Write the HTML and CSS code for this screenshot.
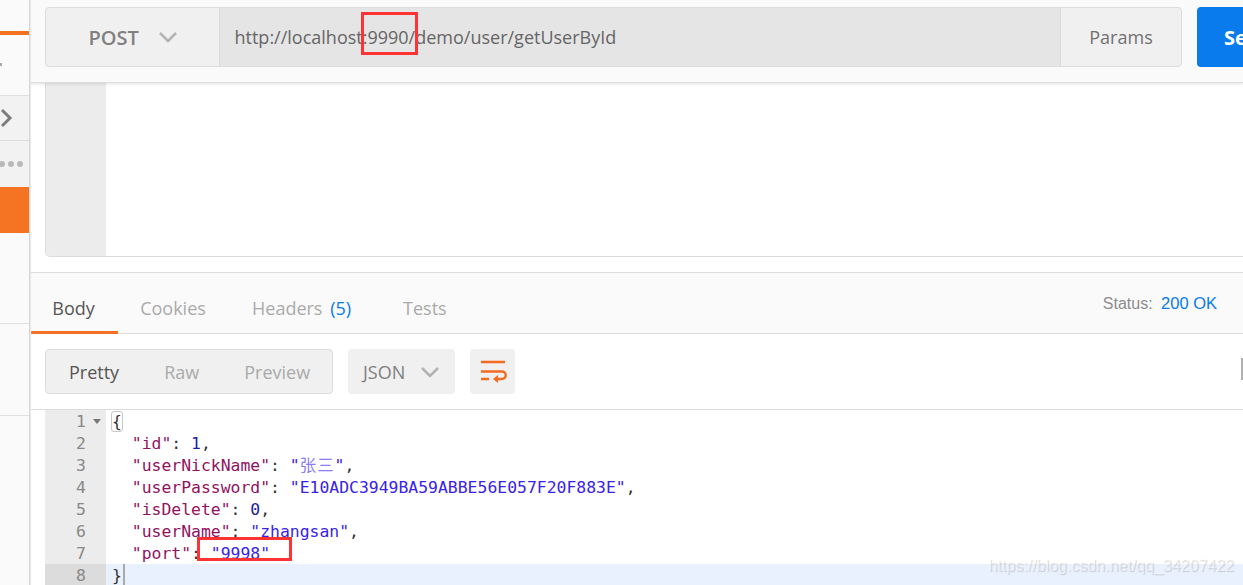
FILE: index.html
```html
<!DOCTYPE html>
<html lang="en">
<head>
<meta charset="utf-8">
<title>Postman</title>
<link rel="stylesheet" href="styles.css">
</head>
<body>
<div class="app">
  <aside class="side">
    <div class="side-top"></div>
    <div class="side-accent"></div>
    <div class="side-a"><span class="side-dot"></span></div>
    <div class="side-b">
      <svg class="chev" width="14" height="20" viewBox="0 0 14 20"><path d="M2 2l8 8-8 8" fill="none" stroke="#7d7d7d" stroke-width="3"/></svg>
    </div>
    <div class="side-c"><i></i><i></i><i></i></div>
    <div class="side-active"></div>
    <div class="side-d"></div>
    <div class="side-e"></div>
    <div class="side-f"></div>
  </aside>
  <main class="main">
    <section class="bar">
      <div class="req">
        <div class="method">
          <span>POST</span>
          <svg width="20" height="12" viewBox="0 0 20 12"><path d="M2 2l8 8 8-8" fill="none" stroke="#b3b3b3" stroke-width="2.6"/></svg>
        </div>
        <div class="url">http://localhost:9990/demo/user/getUserById</div>
        <div class="params">Params</div>
      </div>
      <div class="send">Send</div>
    </section>
    <section class="reqbody">
      <div class="reqbox"><div class="reqgutter"></div></div>
    </section>
    <section class="tabs">
      <div class="tab tab-on">Body</div>
      <div class="tab tab-cookies">Cookies</div>
      <div class="tab tab-headers">Headers <b>(5)</b></div>
      <div class="tab tab-tests">Tests</div>
      <div class="status">Status: <b>200 OK</b></div>
    </section>
    <section class="tools">
      <div class="modes">
        <span class="mode-on">Pretty</span>
        <span class="mode-raw">Raw</span>
        <span class="mode-prev">Preview</span>
      </div>
      <div class="json">
        <span>JSON</span>
        <svg width="20" height="12" viewBox="0 0 20 12"><path d="M2 2l8 8 8-8" fill="none" stroke="#b3b3b3" stroke-width="2.6"/></svg>
      </div>
      <div class="wrap">
        <svg width="26" height="24" viewBox="0 0 26 24"><path d="M0 2h24M0 11.500h21a3.500 3.500 0 0 1 0 7.500h-7M0 19h8" fill="none" stroke="#f26b21" stroke-width="2.300"/><path d="M17 15l-5 4 5 4z" fill="#f26b21"/></svg>
      </div>
      <div class="tick"></div>
    </section>
    <section class="code">
      <div class="ln"><span class="num">1<i class="fold"></i></span><span class="src"><span class="brace">{</span></span></div>
      <div class="ln"><span class="num">2</span><span class="src">  <span class="k">"id"</span>: <span class="n">1</span>,</span></div>
      <div class="ln"><span class="num">3</span><span class="src">  <span class="k">"userNickName"</span>: <span class="s">"<span class="cjk">张三</span>"</span>,</span></div>
      <div class="ln"><span class="num">4</span><span class="src">  <span class="k">"userPassword"</span>: <span class="s">"E10ADC3949BA59ABBE56E057F20F883E"</span>,</span></div>
      <div class="ln"><span class="num">5</span><span class="src">  <span class="k">"isDelete"</span>: <span class="n">0</span>,</span></div>
      <div class="ln"><span class="num">6</span><span class="src">  <span class="k">"userName"</span>: <span class="s">"zhangsan"</span>,</span></div>
      <div class="ln"><span class="num">7</span><span class="src">  <span class="k">"port"</span>: <span class="s">"9998"</span></span></div>
      <div class="ln ln-active"><span class="num">8</span><span class="src">}<i class="caret"></i></span></div>
    </section>
  </main>
</div>
<div class="mark mark-url"></div>
<div class="mark mark-port"></div>
<div class="water">https://blog.csdn.net/qq_34207422</div>
</body>
</html>
```
FILE: styles.css
```css
* { box-sizing: border-box; }
html, body { margin: 0; height: 585px; overflow: hidden; background: #fff; }
body { position: relative; font-family: "Open Sans", sans-serif; color: #808080; }
.app { display: flex; width: 1243px; height: 585px; overflow: hidden; }

.side { width: 30px; flex: none; display: flex; flex-direction: column; background: #fafafa; border-right: 1px solid #d6d6d6; box-shadow: 1px 0 1px #ebebeb; position: relative; z-index: 1; }
.side-top { height: 31px; }
.side-accent { height: 4px; background: #f47023; }
.side-a { height: 61px; border-bottom: 1px solid #e0e0e0; position: relative; }
.side-dot { position: absolute; left: 0; top: 28px; width: 2px; height: 3px; background: #aaa; }
.side-b { height: 45px; background: #f2f2f2; border-bottom: 1px solid #dedede; display: flex; align-items: center; }
.side-c { height: 46px; background: #f2f2f2; display: flex; align-items: center; gap: 3px; margin-left: -1px; }
.side-c i { width: 6px; height: 6px; border-radius: 50%; background: #b9b9b9; }
.side-active { height: 46px; background: #f47423; }
.side-d { height: 91px; border-bottom: 1px solid #e0e0e0; }
.side-e { height: 92px; border-bottom: 1px solid #e0e0e0; }
.side-f { flex: 1; }

.main { flex: 1; min-width: 0; display: flex; flex-direction: column; }

.bar { height: 83px; flex: none; background: #fafafa; border-bottom: 1px solid #dedede; box-shadow: 0 1px 3px rgba(0,0,0,.12); padding: 7px 0 0 15px; display: flex; gap: 15px; position: relative; align-items: flex-start; }
.req { width: 1137px; height: 60px; flex: none; display: flex; border: 1px solid #dcdcdc; border-radius: 4px; overflow: hidden; background: #f0f0f0; }
.method { width: 174px; flex: none; border-right: 1px solid #dcdcdc; display: flex; align-items: center; gap: 19px; padding-left: 42.500px; font-size: 20px; font-weight: 600; color: #808080; }
.url { flex: 1; background: #e5e5e5; display: flex; align-items: center; padding-left: 14.500px; font-size: 18px; color: #666; }
.params { width: 121px; flex: none; border-left: 1px solid #dcdcdc; display: flex; align-items: center; justify-content: center; font-size: 18px; color: #707070; }
.send { width: 120px; height: 60px; flex: none; background: #097bed; border-radius: 4px; color: #fff; font-size: 20px; font-weight: 700; display: flex; align-items: center; padding-left: 27px; }

.reqbody { height: 190px; flex: none; padding-left: 15px; background: #fff; border-bottom: 1px solid #dcdcdc; }
.reqbox { height: 174px; border-left: 1px solid #dcdcdc; border-bottom: 1px solid #dcdcdc; border-bottom-left-radius: 5px; overflow: hidden; }
.reqgutter { width: 60px; height: 100%; background: #ececec; }

.tabs { height: 61px; flex: none; background: #fafafa; border-bottom: 1px solid #dcdcdc; display: flex; align-items: flex-end; position: relative; font-size: 18px; color: #aaa; }
.tab { height: 47px; padding-bottom: 4px; display: flex; align-items: center; justify-content: center; gap: 3px; white-space: pre; }
.tab b { font-weight: 400; color: #097bed; }
.tab-on { width: 88px; color: #555; border-bottom: 3px solid #f47023; height: 48px; margin-bottom: -1px; padding-bottom: 2px; padding-right: 1px; }
.tab-cookies { width: 110px; }
.tab-headers { margin-left: 24px; }
.tab-tests { margin-left: 52px; }
.status { position: absolute; right: 26px; top: 21px; font-family: "Liberation Sans", sans-serif; font-size: 16px; color: #8c8c8c; white-space: pre; }
.status b { font-weight: 400; font-size: 16.500px; color: #097bed; margin-left: 4px; }

.tools { height: 76px; flex: none; padding: 15px 0 0 15px; display: flex; align-items: flex-start; position: relative; font-size: 18px; color: #aaa; border-bottom: 1px solid #dcdcdc; }
.modes { width: 288px; height: 45px; background: #f0f0f0; border: 1px solid #dcdcdc; border-radius: 4px; display: flex; align-items: center; position: relative; }
.mode-on { color: #555; margin-left: 23px; }
.mode-raw { margin-left: 45px; }
.mode-prev { margin-left: 45px; }
.json { width: 107px; height: 45px; margin-left: 15px; background: #f0f0f0; border-radius: 4px; display: flex; align-items: center; gap: 15px; padding-left: 15px; color: #808080; }
.wrap { width: 45px; height: 45px; margin-left: 15px; background: #f0f0f0; border-radius: 4px; display: flex; align-items: center; justify-content: center; padding-left: 2px; }
.tick { position: absolute; right: 0; top: 24px; width: 2px; height: 22px; background: #b0b0b0; }

.code { flex: 1; padding-left: 15px; display: flex; flex-direction: column; }
.ln { height: 22px; flex: none; display: flex; line-height: 24px; font-family: "DejaVu Sans Mono", "Noto Sans CJK SC", monospace; font-size: 16.420px; }
.num { width: 61px; flex: none; background: #ececec; color: #888; text-align: right; padding-right: 20px; position: relative; }
.fold { position: absolute; left: 48px; top: 9px; border: 4px solid transparent; border-top: 5px solid #777; border-bottom: 0; }
.src { padding-left: 6px; white-space: pre; color: #333; flex: 1; }
.brace { outline: 1px solid #c8c8c8; border-radius: 2px; }
.k { color: #92125f; }
.n { color: #1c1ca8; }
.s { color: #3a22e8; }
.cjk { color: #8a7cf2; letter-spacing: 1px; }
.ln-active { background: #e8f1fd; }
.ln-active .num { background: #dcdcdc; }
.caret { display: inline-block; width: 2px; height: 22px; background: #aaa; margin-left: 1px; vertical-align: top; }

.mark { position: absolute; border: 3px solid #f33; }
.mark-url { left: 361px; top: 12px; width: 57px; height: 43px; }
.mark-port { left: 197px; top: 537px; width: 95px; height: 24px; }
.water { position: absolute; right: 9px; top: 557px; font-family: "Liberation Sans", sans-serif; font-size: 16px; color: rgba(255,255,255,.5); text-shadow: 1px 1px 1px rgba(0,0,0,.16); white-space: nowrap; }
```
